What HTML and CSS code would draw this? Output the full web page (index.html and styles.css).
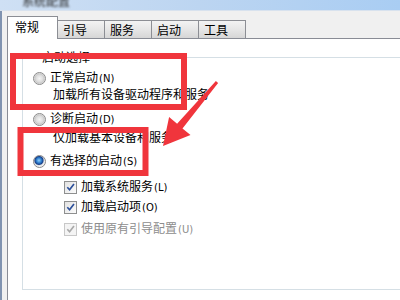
FILE: index.html
```html
<!DOCTYPE html>
<html lang="zh">
<head>
<meta charset="utf-8">
<link rel="stylesheet" href="styles.css">
</head>
<body>
<div class="screen">
  <div class="titlebar"><span class="title">系统配置</span></div>
  <div class="window">
    <div class="frame-edge"></div>
    <div class="dialog">
      <div class="tabs">
        <div class="tab active">常规</div>
        <div class="tab">引导</div>
        <div class="tab">服务</div>
        <div class="tab">启动</div>
        <div class="tab">工具</div>
      </div>
      <div class="panel">
        <fieldset class="group">
          <legend>启动选择</legend>
          <div class="row r1"><span class="radio"></span><span>正常启动<span class="acc">(N)</span></span></div>
          <div class="desc d1">加载所有设备驱动程序和服务</div>
          <div class="row r2"><span class="radio"></span><span>诊断启动<span class="acc">(D)</span></span></div>
          <div class="desc d2">仅加载基本设备和服务</div>
          <div class="row r3"><span class="radio checked"></span><span>有选择的启动<span class="acc">(S)</span></span></div>
          <div class="crow c1"><span class="check"><svg viewBox="0 0 12 12" width="12" height="12"><path d="M2.5 6.2 L5 9 L9.8 2.6" fill="none" stroke="#2b4f9a" stroke-width="1.8"/></svg></span><span>加载系统服务<span class="acc">(L)</span></span></div>
          <div class="crow c2"><span class="check"><svg viewBox="0 0 12 12" width="12" height="12"><path d="M2.5 6.2 L5 9 L9.8 2.6" fill="none" stroke="#2b4f9a" stroke-width="1.8"/></svg></span><span>加载启动项<span class="acc">(O)</span></span></div>
          <div class="crow c3 disabled"><span class="check"><svg viewBox="0 0 12 12" width="12" height="12"><path d="M2.5 6.2 L5 9 L9.8 2.6" fill="none" stroke="#a8a8a8" stroke-width="1.8"/></svg></span><span>使用原有引导配置<span class="acc">(U)</span></span></div>
        </fieldset>
      </div>
    </div>
  </div>
  <svg class="marks" width="400" height="300" viewBox="0 0 400 300">
    <rect x="13" y="56" width="171" height="51" fill="none" stroke="#f0353c" stroke-width="6"/>
    <rect x="20.5" y="130" width="125" height="43" fill="none" stroke="#f0353c" stroke-width="6"/>
    <polygon points="218.1,83 182.5,128.4 190.5,135.1 163,146 169.1,117.1 177.1,123.8 215.9,81" fill="#f0353c"/>
  </svg>
</div>
</body>
</html>
```
FILE: styles.css
```css
html, body {
  margin: 0;
  padding: 0;
}
body {
  width: 400px;
  height: 300px;
  overflow: hidden;
  background: #f0f0f0;
  font-family: "Noto Sans CJK SC", "Liberation Sans", sans-serif;
  font-size: 12px;
  color: #000;
}
.screen {
  position: relative;
  width: 400px;
  height: 300px;
  overflow: hidden;
}
.titlebar {
  height: 10px;
  background: linear-gradient(to right, #cfe0f4, #bcd5f1 50%, #a9cdf3);
  border-bottom: 1px solid #d8e2ee;
  overflow: hidden;
}
.title {
  display: block;
  margin-left: 22px;
  margin-top: -6px;
  font-size: 12px;
  line-height: 14px;
  color: #2a2a2a;
  filter: blur(0.8px);
}
.window {
  display: flex;
  height: 289px;
}
.frame-edge {
  width: 2px;
  background: #8093b0;
  flex: none;
}
.dialog {
  flex: 1;
  padding-left: 5px;
  padding-top: 5px;
  display: flex;
  flex-direction: column;
}
.tabs {
  display: flex;
  align-items: flex-end;
  height: 22px;
  position: relative;
  z-index: 1;
}
.tab {
  box-sizing: border-box;
  width: 47px;
  height: 18px;
  padding-left: 5px;
  line-height: 17px;
  border: 1px solid #8c8e94;
  border-bottom: none;
  border-left: none;
  background: linear-gradient(#f3f3f3, #e6e6e6 50%, #d6d6d6);
  white-space: nowrap;
}
.tab.active {
  width: 51px;
  height: 23px;
  padding-left: 7px;
  line-height: 19px;
  border-left: 1px solid #898c95;
  background: #fff;
  margin-bottom: -1px;
}
.panel {
  flex: 1;
  background: #fff;
  border-top: 1px solid #898c95;
  border-left: 1px solid #898c95;
  margin-right: -30px;
  padding: 10px 0 0 14px;
}
.group {
  margin: 0;
  border: 1px solid #d5dfe5;
  padding: 0 0 52px 10px;
}
.group legend {
  padding: 0 3px;
  margin-left: 6px;
  line-height: 16px;
}
.row, .crow, .desc {
  height: 16px;
  line-height: 16px;
  display: flex;
  align-items: center;
  white-space: nowrap;
}
.acc {
  font-size: 10px;
  margin-left: 1px;
  font-family: "DejaVu Sans", sans-serif;
}
.r1 { margin-top: 5px; }
.d1 { padding-left: 20px; }
.r2 { margin-top: 9px; }
.d2 { margin-top: 2px; padding-left: 20px; }
.r3 { margin-top: 8px; }
.c1 { margin-top: 10px; padding-left: 31px; }
.c2 { margin-top: 4px; padding-left: 31px; }
.c3 { margin-top: 6px; padding-left: 31px; }
.radio {
  box-sizing: border-box;
  width: 13px;
  height: 13px;
  border-radius: 50%;
  border: 1px solid #8a8a8a;
  background: radial-gradient(circle at 50% 50%, #f4f4f4 0, #dcdcdc 45%, #c8c8c8 60%, #f6f6f6 75%);
  margin-right: 4px;
  flex: none;
}
.radio.checked {
  background: radial-gradient(circle at 45% 40%, #8fd0ff 0, #2a79c8 30%, #18408a 45%, #e8e8e8 58%, #f6f6f6 75%);
}
.check {
  box-sizing: border-box;
  width: 13px;
  height: 13px;
  border: 1px solid #8e8f8f;
  background: linear-gradient(135deg, #e2e2e2, #fbfbfb);
  margin-right: 4px;
  flex: none;
  display: flex;
  align-items: center;
  justify-content: center;
}
.check svg {
  display: block;
}
.disabled {
  color: #8d8d8d;
}
.disabled .check {
  border-color: #c8c8c8;
  background: #f4f4f4;
}
.marks {
  position: absolute;
  left: 0;
  top: 0;
  pointer-events: none;
}
```
